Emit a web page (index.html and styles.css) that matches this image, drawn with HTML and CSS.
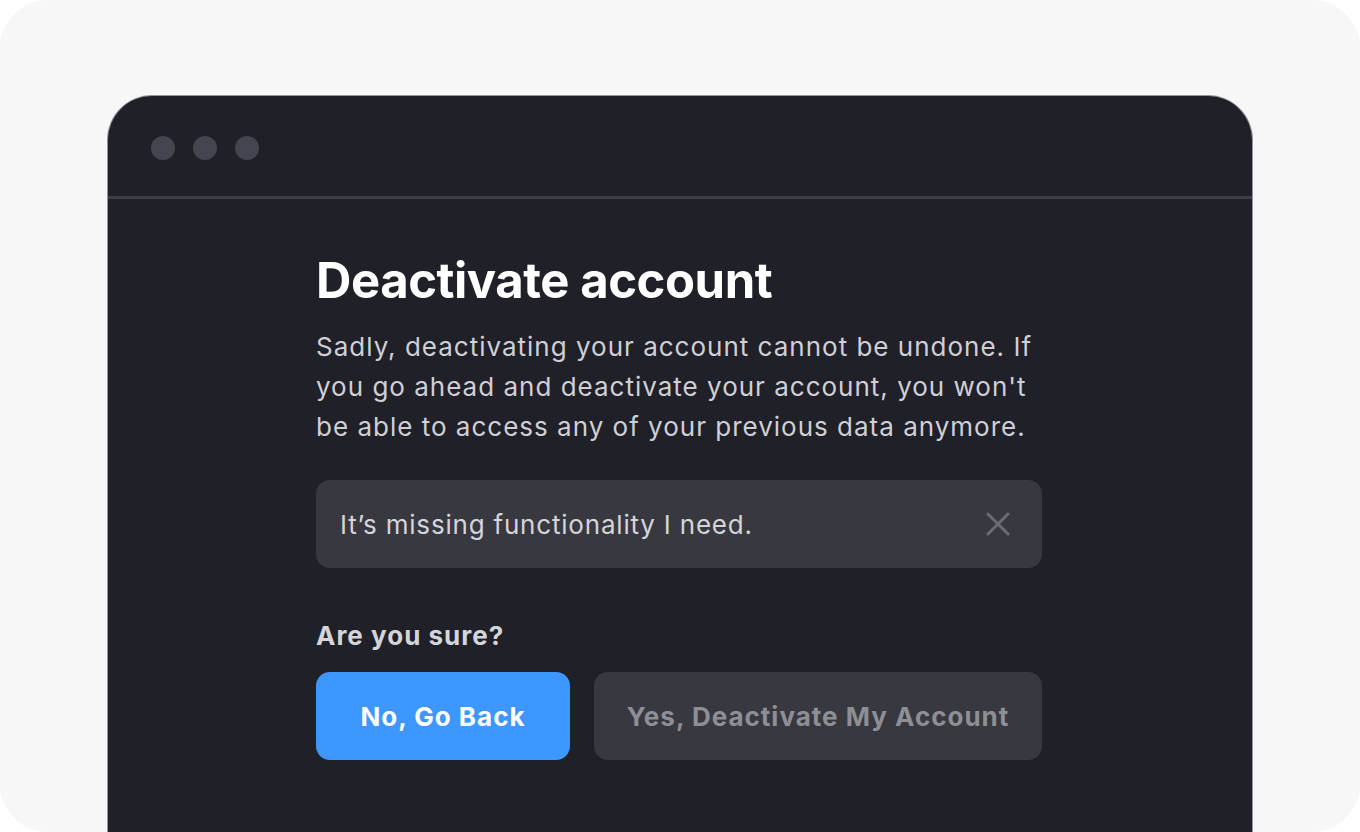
FILE: index.html
```html
<!DOCTYPE html>
<html lang="en">
<head>
<meta charset="utf-8">
<title>Deactivate account</title>
<link rel="stylesheet" href="styles.css">
</head>
<body>
<div class="frame">
  <div class="window">
    <div class="titlebar">
      <span class="dot"></span><span class="dot"></span><span class="dot"></span>
    </div>
    <div class="content">
      <h1 class="title">Deactivate account</h1>
      <p class="desc">Sadly, deactivating your account cannot be undone. If you go ahead and deactivate your account, you won't be able to access any of your previous data anymore.</p>
      <div class="reason">
        <span class="reason-text">It’s missing functionality I need.</span>
        <svg class="close" width="24" height="24" viewBox="0 0 24 24" fill="none" stroke="currentColor" stroke-width="3" stroke-linecap="round"><path d="M2 2 L22 22 M22 2 L2 22"/></svg>
      </div>
      <div class="confirm">Are you sure?</div>
      <div class="actions">
        <button class="btn btn-primary">No, Go Back</button>
        <button class="btn btn-secondary">Yes, Deactivate My Account</button>
      </div>
    </div>
  </div>
</div>
</body>
</html>
```
FILE: styles.css
```css
html, body {
  margin: 0;
  padding: 0;
  background: #ffffff;
  height: 832px;
  overflow: hidden;
  font-family: Inter, "Noto Sans", sans-serif;
}
.frame {
  height: 832px;
  box-sizing: border-box;
  background: #f7f7f7;
  border-radius: 48px;
  padding: 96px 108px 0;
  overflow: hidden;
}
.window {
  background: #202028;
  border-radius: 44px 44px 0 0;
  height: 800px;
  box-shadow: 0 0 0 1px rgba(32, 32, 40, 0.45);
}
.titlebar {
  height: 103px;
  box-sizing: border-box;
  padding: 40px 0 0 43px;
  display: flex;
  gap: 18px;
  border-bottom: 3px solid #3d3d46;
}
.dot {
  width: 24px;
  height: 24px;
  border-radius: 50%;
  background: #45454f;
}
.content {
  padding: 52px 0 0 208px;
  width: 726px;
}
.title {
  margin: 0;
  font-size: 49px;
  font-weight: 700;
  line-height: 60px;
  color: #ffffff;
  letter-spacing: -0.45px;
}
.desc {
  margin: 16px 0 0;
  font-size: 26px;
  line-height: 40px;
  letter-spacing: 1px;
  color: #cfcfd5;
}
.reason {
  margin-top: 33px;
  height: 88px;
  border-radius: 14px;
  background: #383840;
  display: flex;
  align-items: center;
  justify-content: space-between;
  padding: 0 32px 0 24px;
}
.reason-text {
  font-size: 26px;
  letter-spacing: 0.8px;
  color: #d4d4d9;
}
.close {
  color: #6b6b73;
}
.confirm {
  margin-top: 52px;
  font-size: 26px;
  font-weight: 700;
  letter-spacing: 1px;
  color: #d4d4d9;
  line-height: 32px;
}
.actions {
  margin-top: 20px;
  display: flex;
  gap: 24px;
}
.btn {
  height: 88px;
  border: 0;
  border-radius: 14px;
  font-family: Inter, "Noto Sans", sans-serif;
  font-size: 26px;
  font-weight: 700;
  letter-spacing: 1px;
  padding: 0;
}
.btn-primary {
  width: 254px;
  background: #3e97ff;
  color: #ffffff;
}
.btn-secondary {
  flex: 1;
  background: #383840;
  color: #8e8e95;
}
```
